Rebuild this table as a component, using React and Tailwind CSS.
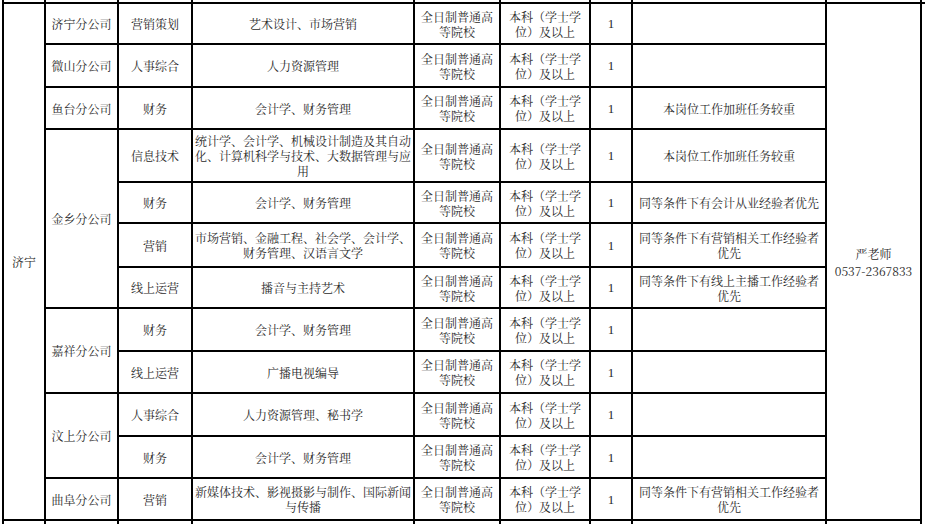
import React from "react";

// column tracks: 地区 | 公司 | 岗位 | 专业 | 学历类型 | 学历 | 人数 | 备注 | 联系方式
const COLS = "grid grid-cols-[42px_73px_74px_222px_86px_90px_42px_194px_95px]";

const ROWS = [
  { company: "济宁分公司", span: 1, post: "营销策划", major: "艺术设计、市场营销", note: "" },
  { company: "微山分公司", span: 1, post: "人事综合", major: "人力资源管理", note: "" },
  { company: "鱼台分公司", span: 1, post: "财务", major: "会计学、财务管理", note: "本岗位工作加班任务较重" },
  {
    company: "金乡分公司",
    span: 4,
    post: "信息技术",
    major: "统计学、会计学、机械设计制造及其自动化、计算机科学与技术、大数据管理与应用",
    note: "本岗位工作加班任务较重",
  },
  { post: "财务", major: "会计学、财务管理", note: "同等条件下有会计从业经验者优先" },
  {
    post: "营销",
    major: "市场营销、金融工程、社会学、会计学、财务管理、汉语言文学",
    note: "同等条件下有营销相关工作经验者优先",
  },
  { post: "线上运营", major: "播音与主持艺术", note: "同等条件下有线上主播工作经验者优先" },
  { company: "嘉祥分公司", span: 2, post: "财务", major: "会计学、财务管理", note: "" },
  { post: "线上运营", major: "广播电视编导", note: "" },
  { company: "汶上分公司", span: 2, post: "人事综合", major: "人力资源管理、秘书学", note: "" },
  { post: "财务", major: "会计学、财务管理", note: "" },
  {
    company: "曲阜分公司",
    span: 1,
    post: "营销",
    major: "新媒体技术、影视摄影与制作、国际新闻与传播",
    note: "同等条件下有营销相关工作经验者优先",
  },
];

const SPAN = { 1: "row-span-1", 2: "row-span-2", 4: "row-span-4" };

const Cell = ({ children, className = "", px = "px-1", lh = "leading-[15px]" }) => (
  <div
    className={`flex items-center justify-center border-r-2 border-b-2 border-black text-center ${px} ${className}`}
  >
    <div className={`w-full text-center ${lh}`}>{children}</div>
  </div>
);

// slivers of the rows above / below the visible part
const Tail = ({ h }) => (
  <div className={`${COLS} border-l-2 border-black ${h}`}>
    {Array.from({ length: 9 }).map((_, i) => (
      <div key={i} className="border-r-2 border-black" />
    ))}
  </div>
);

const App = () => {
  return (
    <div className="h-[524px] w-[925px] overflow-hidden bg-white pl-[2px] font-['Noto_Serif_CJK_SC','Noto_Sans_CJK_SC',serif] text-[12px] text-[#2a2a2a]">
      <Tail h="h-[2px]" />
      <div className={`${COLS} grid-rows-[41px_43px_42px_53px_41px_44px_41px_43px_42px_43px_42px_42px] border-l-2 border-t-2 border-black`}>
        {ROWS.map((r, i) => (
          <React.Fragment key={i}>
            {i === 0 && <Cell className="row-span-12">济宁</Cell>}
            {r.company && <Cell className={SPAN[r.span]}>{r.company}</Cell>}
            <Cell>{r.post}</Cell>
            <Cell px="px-[2px]">{r.major}</Cell>
            <Cell>全日制普通高等院校</Cell>
            <Cell>本科（学士学位）及以上</Cell>
            <Cell className="font-['Liberation_Serif',serif] text-[13px]">1</Cell>
            <Cell>{r.note}</Cell>
            {i === 0 && (
              <Cell className="row-span-12" lh="leading-[17px]">
                严老师
                <br />
                0537-2367833
              </Cell>
            )}
          </React.Fragment>
        ))}
      </div>
      <Tail h="h-[3px]" />
    </div>
  );
};

export default App;
